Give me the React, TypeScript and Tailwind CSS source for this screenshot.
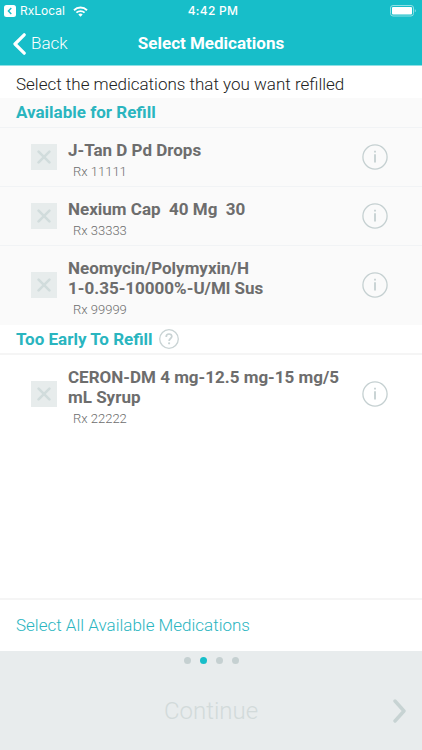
import { useState } from 'react'

type Medication = {
  rx: string
  name: string
}

const available: Medication[] = [
  { rx: '11111', name: 'J-Tan D Pd Drops' },
  { rx: '33333', name: 'Nexium Cap  40 Mg  30' },
  { rx: '99999', name: 'Neomycin/Polymyxin/H\n1-0.35-10000%-U/Ml Sus' },
]

const tooEarly: Medication[] = [{ rx: '22222', name: 'CERON-DM 4 mg-12.5 mg-15 mg/5 mL Syrup' }]

const STEPS = 4
const CURRENT_STEP = 1

function StatusBar() {
  return (
    <div className="grid h-[22px] grid-cols-[1fr_auto_1fr] items-center px-1 font-['Inter','Roboto',sans-serif] text-xs font-medium">
      <div className="flex items-center gap-1 font-normal">
        <svg width="12" height="12" viewBox="0 0 12 12" aria-hidden="true">
          <rect width="12" height="12" rx="2.5" fill="#fff" />
          <path d="M7.3 3 L4.4 6 L7.3 9" fill="none" stroke="#17bec9" strokeWidth="1.4" />
        </svg>
        <span>RxLocal</span>
        <svg className="ml-1" width="15" height="11" viewBox="0 0 15 11" aria-hidden="true">
          <path d="M1 4.2 A9.3 9.3 0 0 1 14 4.2" fill="none" stroke="#fff" strokeWidth="1.9" />
          <path d="M3.4 6.7 A5.9 5.9 0 0 1 11.6 6.7" fill="none" stroke="#fff" strokeWidth="1.8" />
          <path d="M7.5 10.8 L5.3 8.5 A3.2 3.2 0 0 1 9.7 8.5 Z" fill="#fff" />
        </svg>
      </div>
      <span className="pl-1 tracking-wide">4:42 PM</span>
      <svg className="justify-self-end" width="28" height="12" viewBox="0 0 28 12" aria-hidden="true">
        <rect x="0.5" y="0.5" width="23" height="10.5" rx="2.5" fill="none" stroke="#8fe0e5" />
        <rect x="2" y="2" width="20" height="7.5" rx="1" fill="#fff" />
        <path d="M24.8 4.2 A1.7 1.7 0 0 1 24.8 7.3 Z" fill="#8fe0e5" />
      </svg>
    </div>
  )
}

function MedicationRow({ med, checked, onToggle }: { med: Medication; checked: boolean; onToggle: () => void }) {
  return (
    <li className="flex items-center border-b border-[#f1f3f5] pr-[34px] pl-[31px] last:border-transparent">
      <div className="grid size-[26px] shrink-0 place-items-center">
        <input
          id={`rx-${med.rx}`}
          type="checkbox"
          checked={checked}
          onChange={onToggle}
          className="col-start-1 row-start-1 size-[26px] appearance-none bg-[#e7ecec]"
        />
        <svg
          className={`pointer-events-none col-start-1 row-start-1 ${checked ? 'text-[#17bec9]' : 'text-[#d1dcdc]'}`}
          width="14"
          height="14"
          viewBox="0 0 14 14"
          aria-hidden="true"
        >
          <path
            d="M1.6 1.6 L12.4 12.4 M12.4 1.6 L1.6 12.4"
            stroke="currentColor"
            strokeWidth="2.6"
            strokeLinecap="round"
          />
        </svg>
      </div>
      <label htmlFor={`rx-${med.rx}`} className="min-w-0 flex-1 pt-3 pr-3 pb-1 pl-[11px]">
        <span className="block text-[17px] leading-5 font-bold whitespace-pre-wrap text-[#6d6d6d]">{med.name}</span>
        <span className="mt-[2px] block pl-[5px] text-[13px] leading-5 font-light text-[#6d6d6d]">Rx {med.rx}</span>
      </label>
      <button type="button" aria-label={`Details for Rx ${med.rx}`} className="shrink-0">
        <svg width="26" height="26" viewBox="0 0 26 26" aria-hidden="true">
          <circle cx="13" cy="13" r="12.1" fill="none" stroke="#c5d0d1" strokeWidth="1.3" />
          <path d="M13 10.2 V18.4" stroke="#c5d0d1" strokeWidth="1.8" />
          <path d="M13 6.8 V8.6" stroke="#c5d0d1" strokeWidth="1.8" />
        </svg>
      </button>
    </li>
  )
}

export default function App() {
  const [selected, setSelected] = useState<string[]>([])

  const toggle = (rx: string) =>
    setSelected(selected.includes(rx) ? selected.filter(r => r !== rx) : [...selected, rx])

  return (
    <div className="flex min-h-screen flex-col bg-white font-['Roboto',sans-serif]">
      <header className="border-b border-[#8fe0e5] bg-[#17bec9] text-white">
        <StatusBar />
        <div className="grid h-[43px] grid-cols-[1fr_auto_1fr] items-center px-3">
          <button type="button" className="flex items-center gap-1 justify-self-start text-[17px] font-light">
            <svg width="15" height="22" viewBox="0 0 15 22" aria-hidden="true">
              <path
                d="M12.2 1.8 L3 11 L12.2 20.2"
                fill="none"
                stroke="#fff"
                strokeWidth="3.2"
                strokeLinecap="round"
                strokeLinejoin="round"
              />
            </svg>
            Back
          </button>
          <h1 className="text-[17px] font-bold">Select Medications</h1>
        </div>
      </header>

      <main className="flex flex-1 flex-col">
        <p className="px-4 pt-[6px] pb-[2px] text-[17px] leading-6 font-light text-[#222]">
          Select the medications that you want refilled
        </p>

        {/* Available */}
        <section className="bg-[#fafafa]">
          <h2 className="border-b border-[#f1f3f5] px-4 pt-1 pb-[5px] text-[17px] leading-5 font-bold text-[#2ab5bf]">
            Available for Refill
          </h2>
          <ul>
            {available.map(med => (
              <MedicationRow
                key={med.rx}
                med={med}
                checked={selected.includes(med.rx)}
                onToggle={() => toggle(med.rx)}
              />
            ))}
          </ul>
        </section>

        {/* Too early */}
        <section>
          <div className="flex items-center gap-[6px] border-b-2 border-[#f5f5f5] px-4 py-1">
            <h2 className="text-[17px] leading-5 font-bold text-[#2ab5bf]">Too Early To Refill</h2>
            <button type="button" aria-label="Why is it too early to refill?">
              <svg width="20" height="20" viewBox="0 0 20 20" aria-hidden="true">
                <circle cx="10" cy="10" r="9.3" fill="none" stroke="#c9d3d4" strokeWidth="1.3" />
                <path
                  d="M7.2 7.9 C7.2 6 8.3 5 10 5 C11.7 5 12.8 6 12.8 7.5 C12.8 9.5 10.1 9.6 10.1 12"
                  fill="none"
                  stroke="#c9d3d4"
                  strokeWidth="1.7"
                />
                <circle cx="10.1" cy="14.3" r="1.1" fill="#c9d3d4" />
              </svg>
            </button>
          </div>
          <ul>
            {tooEarly.map(med => (
              <MedicationRow
                key={med.rx}
                med={med}
                checked={selected.includes(med.rx)}
                onToggle={() => toggle(med.rx)}
              />
            ))}
          </ul>
        </section>
      </main>

      <div className="border-t-2 border-[#f5f5f5]">
        <button
          type="button"
          onClick={() => setSelected(available.map(med => med.rx))}
          className="block w-full px-4 pt-[13px] pb-[14px] text-left text-[17px] leading-6 font-light text-[#2ab5bf]"
        >
          Select All Available Medications
        </button>
      </div>

      <footer className="bg-[#e8eced] pt-[6px]">
        <div className="flex justify-center gap-[9px]">
          {Array.from({ length: STEPS }, (_, i) => (
            <span
              key={i}
              className={`size-[7px] rounded-full ${i === CURRENT_STEP ? 'bg-[#17bec9]' : 'bg-[#c5d0d1]'}`}
            />
          ))}
        </div>
        <button
          type="button"
          className="grid h-[86px] w-full grid-cols-[1fr_auto_1fr] items-center px-4 pt-2 text-2xl font-light text-[#d2dada]"
        >
          <span className="col-start-2">Continue</span>
          <svg className="justify-self-end" width="13" height="24" viewBox="0 0 13 24" aria-hidden="true">
            <path
              d="M2 2 L11 12 L2 22"
              fill="none"
              stroke="#c7d3d3"
              strokeWidth="3.4"
              strokeLinecap="round"
              strokeLinejoin="round"
            />
          </svg>
        </button>
      </footer>
    </div>
  )
}
